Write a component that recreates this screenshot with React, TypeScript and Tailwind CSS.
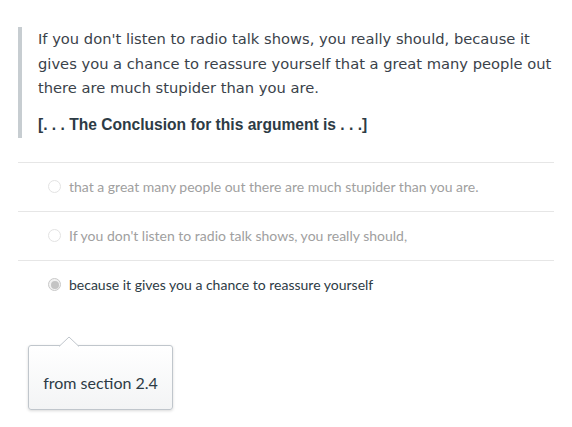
import { useState } from 'react'

const options = [
  'that a great many people out there are much stupider than you are.',
  "If you don't listen to radio talk shows, you really should,",
  'because it gives you a chance to reassure yourself',
]

export default function App() {
  const [selected] = useState(2)

  return (
    <div className="w-[572px] h-[427px] bg-white px-[18px] pt-[27px] overflow-hidden">
      <div className="border-l-4 border-[#c7cdd1] pl-4 pb-[3px]">
        <p className="text-[14.7px] leading-[24.5px] text-[#3a424a]" style={{ fontFamily: '"DejaVu Sans", sans-serif' }}>
          If you don't listen to radio talk shows, you really should, because it gives you a chance to reassure yourself
          that a great many people out there are much stupider than you are.
        </p>
        <p className="mt-[14px] text-[15.6px] font-bold leading-[20px] text-[#2d3b45]" style={{ fontFamily: '"Liberation Sans", Arial, sans-serif' }}>
          [. . . The Conclusion for this argument is . . .]
        </p>
      </div>

      <div className="mt-[24px]" style={{ fontFamily: 'Lato, sans-serif' }}>
        {options.map((opt, i) => (
          <div key={i} className="h-[49px] border-t border-[#e6e6e6] flex items-center pl-[30px] gap-[8px]">
            {i === selected ? (
              <span className="w-[13px] h-[13px] rounded-full border border-[#c9c9c9] bg-[#f2f2f2] flex items-center justify-center">
                <span className="w-[8px] h-[8px] rounded-full bg-[#c4c4c4]" />
              </span>
            ) : (
              <span className="w-[13px] h-[13px] rounded-full border border-[#e3e3e3] bg-white" />
            )}
            <span className={'text-[14px] ' + (i === selected ? 'text-[#2d3b45]' : 'text-[#a0a0a0]')}>{opt}</span>
          </div>
        ))}
      </div>

      <div className="relative mt-[36px] ml-[10px] w-[145px] h-[65px] rounded-[3px] border border-[#c0c6cc] bg-gradient-to-b from-white to-[#f3f4f5] shadow-[0_1px_3px_rgba(0,0,0,0.15)] flex items-center justify-center pt-[11px]">
        <svg className="absolute -top-[10px] left-[30px]" width="20" height="11" viewBox="0 0 20 11">
          <path d="M0 10.5 L10 1 L20 10.5" fill="white" stroke="#c0c6cc" strokeWidth="1" />
        </svg>
        <span className="text-[16px] text-[#2d3b45]" style={{ fontFamily: 'Lato, sans-serif' }}>from section 2.4</span>
      </div>
    </div>
  )
}
